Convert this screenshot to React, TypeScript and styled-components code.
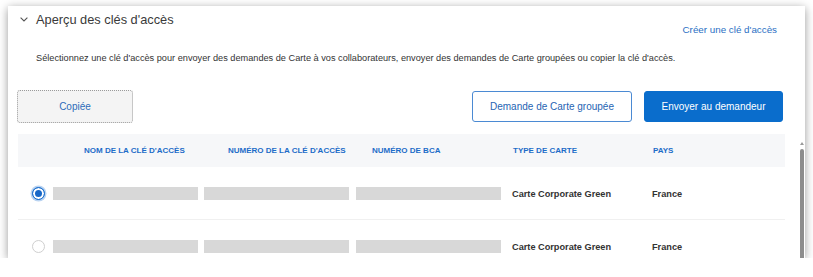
import React from "react";
import styled, { createGlobalStyle } from "styled-components";

const Global = createGlobalStyle`
  html, body { margin: 0; padding: 0; background: #ffffff; }
  body { font-family: "Liberation Sans", Arial, sans-serif; color: #333; }
`;

const Card = styled.div`
  position: relative;
  margin: 6px 0 0 8px;
  width: 797px;
  height: 252px;
  background: #fff;
  box-shadow: 0 2px 9px rgba(0, 0, 0, 0.4);
  overflow: hidden;
  box-sizing: border-box;
  padding: 0 22px 0 10px;
`;

const TopRow = styled.div`
  display: flex;
  justify-content: space-between;
  align-items: flex-start;
  height: 36px;
`;

const Title = styled.div`
  display: flex;
  align-items: center;
  gap: 8px;
  padding: 6px 0 0 2px;
  font-size: 12.8px;
  color: #3a3a3a;
`;

const Link = styled.a`
  font-size: 9.8px;
  color: #2a6fc4;
  padding-top: 18px;
  margin-right: 6px;
  text-decoration: none;
`;

const Desc = styled.p`
  margin: 10px 0 0 18px;
  font-size: 9.2px;
  color: #333;
  line-height: 12px;
`;

const Actions = styled.div`
  display: flex;
  align-items: center;
  margin-top: 26px;
  gap: 12px;
`;

const Spacer = styled.div`
  flex: 1;
`;

const Button = styled.button<{ $variant: "ghost" | "outline" | "primary" }>`
  box-sizing: border-box;
  border-radius: 3px;
  font-family: "Liberation Sans", Arial, sans-serif;
  font-size: 10px;
  cursor: pointer;
  ${(p) =>
    p.$variant === "ghost"
      ? `width: 116px; height: 33px; margin-left: -1px; background: #f4f4f4; border: 1px dotted #9a9a9a; color: #2d6cba;`
      : p.$variant === "outline"
      ? `width: 160px; height: 31px; background: #fff; border: 1px solid #4b8ad3; color: #2664b3;`
      : `width: 139px; height: 31px; background: #0a6dcc; border: 1px solid #0a6dcc; color: #fff;`}
`;

const Table = styled.div`
  margin-top: 11px;
  width: 767px;
`;

const HeadRow = styled.div`
  display: grid;
  grid-template-columns: 144px 144px 141px 140px 1fr;
  padding-left: 66px;
  height: 33px;
  align-items: center;
  background: #f6f7f9;
`;

const HeadCell = styled.div`
  font-size: 8px;
  font-weight: bold;
  color: #1d6cc8;
`;

const BodyRow = styled.div`
  display: grid;
  grid-template-columns: 21px 151px 152px 156px 140px 1fr;
  padding-left: 14px;
  height: 53px;
  align-items: center;
  border-bottom: 1px solid #f0f0f0;
  padding-top: 1px;
  box-sizing: border-box;
`;

const Radio = styled.span<{ $checked?: boolean }>`
  width: 13px;
  height: 13px;
  box-sizing: border-box;
  border-radius: 50%;
  border: 1px solid ${(p) => (p.$checked ? "#1a6fcf" : "#cfcfcf")};
  background: ${(p) => (p.$checked ? "#1767c7" : "#fff")};
  box-shadow: ${(p) =>
    p.$checked ? "inset 0 0 0 2px #fff, 0 0 0 1.5px #b9d3f1" : "none"};
`;

const Bar = styled.div`
  width: 145px;
  height: 13px;
  background: #d8d8d8;
`;

const Cell = styled.div`
  font-size: 9.2px;
  font-weight: bold;
  color: #333;
`;

const Scrollbar = styled.div`
  position: absolute;
  right: 1px;
  top: 136px;
  bottom: 0;
  width: 5px;
  display: flex;
  flex-direction: column;
  align-items: center;
`;

const Arrow = styled.div`
  width: 0;
  height: 0;
  border-left: 2.5px solid transparent;
  border-right: 2.5px solid transparent;
  border-bottom: 3px solid #9a9a9a;
  margin-bottom: 4px;
`;

const Thumb = styled.div`
  flex: 1;
  width: 4px;
  background: #8d8d8d;
  border-radius: 2px 2px 0 0;
`;

const Chevron = () => (
  <svg width="8" height="5" viewBox="0 0 8 5">
    <path d="M0.6 0.6 L4 4 L7.4 0.6" fill="none" stroke="#555" strokeWidth="1.1" />
  </svg>
);

const rows = [{ checked: true }, { checked: false }];

export default function App() {
  return (
    <>
      <Global />
      <Card>
        <TopRow>
          <Title>
            <Chevron />
            <span>Aperçu des clés d'accès</span>
          </Title>
          <Link>Créer une clé d'accès</Link>
        </TopRow>
        <Desc>
          Sélectionnez une clé d'accès pour envoyer des demandes de Carte à vos collaborateurs, envoyer des
          demandes de Carte groupées ou copier la clé d'accès.
        </Desc>
        <Actions>
          <Button $variant="ghost">Copiée</Button>
          <Spacer />
          <Button $variant="outline">Demande de Carte groupée</Button>
          <Button $variant="primary">Envoyer au demandeur</Button>
        </Actions>
        <Table>
          <HeadRow>
            <HeadCell>NOM DE LA CLÉ D'ACCÈS</HeadCell>
            <HeadCell>NUMÉRO DE LA CLÉ D'ACCÈS</HeadCell>
            <HeadCell>NUMÉRO DE BCA</HeadCell>
            <HeadCell>TYPE DE CARTE</HeadCell>
            <HeadCell>PAYS</HeadCell>
          </HeadRow>
          {rows.map((r, i) => (
            <BodyRow key={i}>
              <Radio $checked={r.checked} />
              <Bar />
              <Bar />
              <Bar />
              <Cell>Carte Corporate Green</Cell>
              <Cell>France</Cell>
            </BodyRow>
          ))}
        </Table>
        <Scrollbar>
          <Arrow />
          <Thumb />
        </Scrollbar>
      </Card>
    </>
  );
}
